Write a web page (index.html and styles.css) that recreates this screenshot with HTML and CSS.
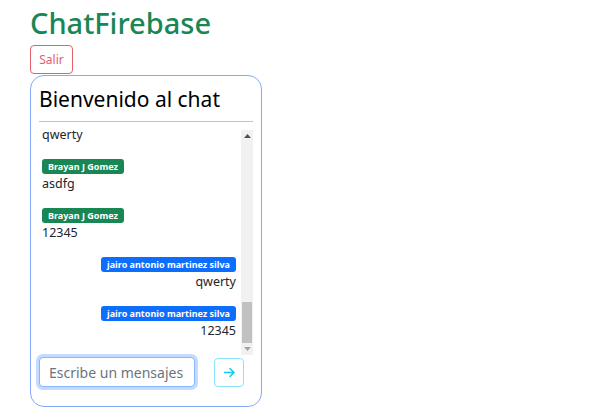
FILE: index.html
```html
<!DOCTYPE html>
<html lang="es">
<head>
<meta charset="utf-8">
<title>ChatFirebase</title>
<link rel="stylesheet" href="styles.css">
</head>
<body>
<div class="page">
  <h1 class="brand">ChatFirebase</h1>
  <button class="btn-salir">Salir</button>
  <div class="chat-card">
    <h2 class="chat-title">Bienvenido al chat</h2>
    <hr class="divider">
    <div class="chat-body">
      <div class="messages">
        <div class="messages-inner">
          <div class="msg left"><p class="text">qwerty</p></div>
          <div class="msg left"><span class="badge green">Brayan J Gomez</span><p class="text">asdfg</p></div>
          <div class="msg left"><span class="badge green">Brayan J Gomez</span><p class="text">12345</p></div>
          <div class="msg right"><span class="badge blue">jairo antonio martinez silva</span><p class="text">qwerty</p></div>
          <div class="msg right last"><span class="badge blue">jairo antonio martinez silva</span><p class="text">12345</p></div>
        </div>
      </div>
      <div class="scrollbar" aria-hidden="true">
        <div class="sb-btn"><svg width="7" height="4" viewBox="0 0 7 4"><path d="M0 4L3.5 0L7 4Z" fill="#505050"/></svg></div>
        <div class="sb-track"><div class="sb-thumb"></div></div>
        <div class="sb-btn"><svg width="7" height="4" viewBox="0 0 7 4"><path d="M0 0L3.5 4L7 0Z" fill="#a3a3a3"/></svg></div>
      </div>
    </div>
    <form class="composer">
      <input class="msg-input" type="text" placeholder="Escribe un mensajes" autofocus>
      <button class="btn-send" type="button" aria-label="Enviar">
        <svg width="13" height="13" viewBox="0 0 16 16" fill="none" stroke="currentColor" stroke-width="1.8" stroke-linecap="round" stroke-linejoin="round"><path d="M2 8h11.5M8.5 3l5 5-5 5"/></svg>
      </button>
    </form>
  </div>
</div>
</body>
</html>
```

FILE: styles.css
```css
* { box-sizing: border-box; }
html, body { margin: 0; padding: 0; background: #fff; }
body {
  font-family: "Segoe UI", "Noto Sans", "Open Sans", sans-serif;
  color: #212529;
}
.page {
  padding: 5px 0 0 30px;
  display: flex;
  flex-direction: column;
  align-items: flex-start;
}
.brand {
  margin: 0 0 4px 0;
  font-size: 29px;
  font-weight: 500;
  line-height: 36px;
  color: #198754;
}
.btn-salir {
  font-family: inherit;
  font-size: 12px;
  line-height: 18px;
  padding: 4px 8px;
  height: 29px;
  width: 43px;
  color: #e2606d;
  background: #fff;
  border: 1px solid #e4606d;
  border-radius: 4px;
}
.chat-card {
  margin-top: 1px;
  width: 232px;
  height: 332px;
  border: 1px solid #86a8fb;
  border-radius: 14px;
  padding: 8px 8px 0 8px;
  display: flex;
  flex-direction: column;
}
.chat-title {
  margin: 0;
  font-size: 21px;
  font-weight: 400;
  line-height: 30px;
  color: #000;
}
.divider {
  margin: 7px 0 8px 0;
  border: 0;
  border-top: 1px solid #c4c4c4;
}
.chat-body {
  display: flex;
  height: 225px;
  gap: 5px;
}
.messages {
  flex: 1;
  margin-left: 3px;
  overflow: hidden;
  display: flex;
  flex-direction: column-reverse;
}
.messages-inner {
  display: flex;
  flex-direction: column;
}
.msg {
  display: flex;
  flex-direction: column;
  margin-bottom: 14px;
}
.msg.last { margin-bottom: 14px; }
.msg.left { align-items: flex-start; }
.msg.right { align-items: flex-end; }
.badge {
  display: inline-block;
  font-size: 9px;
  font-weight: 700;
  line-height: 11px;
  padding: 2px 6px;
  border-radius: 3px;
  color: #fff;
  white-space: nowrap;
}
.badge.green { background: #198754; }
.badge.blue { background: #0d6efd; }
.text {
  margin: 0;
  font-size: 12.5px;
  line-height: 20px;
  color: #212529;
}
.scrollbar {
  width: 12px;
  display: flex;
  flex-direction: column;
  background: #f1f1f1;
}
.sb-btn {
  height: 12px;
  display: flex;
  align-items: center;
  justify-content: center;
}
.sb-track {
  flex: 1;
  display: flex;
  flex-direction: column;
  justify-content: flex-end;
  padding: 0 1px;
}
.sb-thumb {
  height: 41px;
  background: #c1c1c1;
}
.composer {
  margin-top: 2px;
  display: flex;
  align-items: center;
  gap: 19px;
}
.msg-input {
  width: 156px;
  height: 30px;
  font-family: inherit;
  font-size: 14px;
  padding: 3px 3px 3px 9px;
  border: 1px solid #86b7fe;
  border-radius: 4px;
  box-shadow: 0 0 0 3px rgba(13, 110, 253, 0.25);
  outline: none;
  color: #212529;
}
.msg-input::placeholder { color: #6c757d; }
.btn-send {
  width: 30px;
  height: 29px;
  padding: 0;
  display: flex;
  align-items: center;
  justify-content: center;
  background: #fff;
  color: #0dcaf0;
  border: 1px solid #86e5f8;
  border-radius: 4px;
}
```
